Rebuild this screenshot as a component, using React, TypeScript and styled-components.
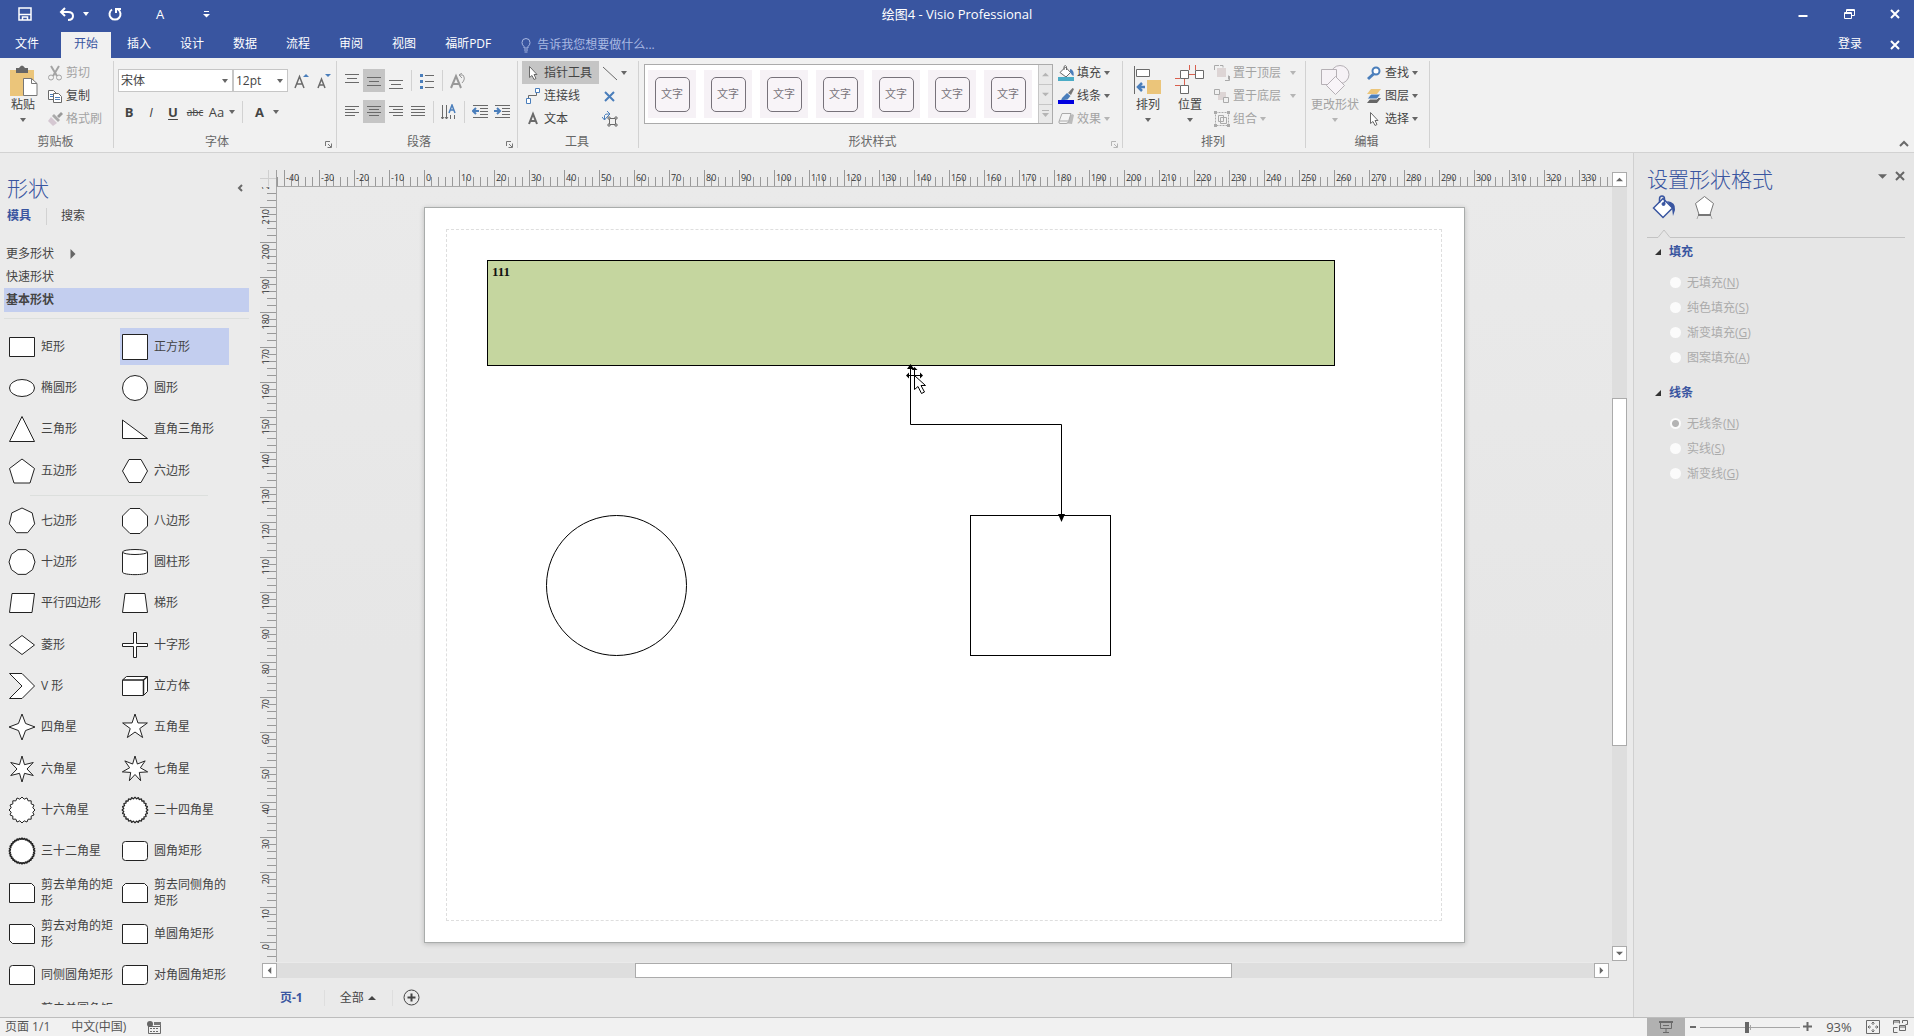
import React from 'react';
import styled, { createGlobalStyle, css } from 'styled-components';

const BLUE = '#3955a0';
const GREY = '#6a6a6a';
const FONT = '"Open Sans", "Noto Sans CJK SC", sans-serif';

const Global = createGlobalStyle`
  * { box-sizing: border-box; }
  body { margin: 0; font: 12px/16px ${FONT}; color: #444; background: #eaeaea; overflow: hidden; }
  button, input, select { font: inherit; color: inherit; }
  button { border: 0; padding: 0; background: none; cursor: default; }
`;

/* ---------- layout ---------- */
const Window = styled.div`
  display: flex;
  flex-direction: column;
  height: 100vh;
`;
const Row = styled.div`
  display: flex;
  align-items: center;
`;
const Column = styled.div`
  display: flex;
  flex-direction: column;
  align-items: flex-start;
`;

/* ---------- title bar ---------- */
const TitleBar = styled.header`
  display: grid;
  grid-template-columns: 1fr auto 1fr;
  height: 32px;
  flex: none;
  background: ${BLUE};
  color: #fff;
`;
const TitleText = styled.h1`
  margin: 0;
  font-size: 13px;
  font-weight: 400;
  line-height: 29px;
`;
const QuickAccess = styled.div`
  display: flex;
  height: 28px;
  padding-left: 10px;
`;
const QuickButton = styled.button<{ $w: number }>`
  display: flex;
  align-items: center;
  justify-content: center;
  gap: 8px;
  width: ${(p) => p.$w}px;
  font-size: 13px;
`;
const WindowButtons = styled.div`
  display: flex;
  justify-content: flex-end;
  gap: 8px;
  height: 28px;
`;
const WindowButton = styled.button`
  display: flex;
  align-items: center;
  justify-content: center;
  width: 38px;
`;

/* ---------- tabs ---------- */
const TabBar = styled.nav`
  display: flex;
  gap: 3px;
  height: 26px;
  flex: none;
  padding-left: 2px;
  background: ${BLUE};
  color: #fff;
`;
const Tab = styled.button<{ $active?: boolean; $file?: boolean }>`
  padding: 0 13px 2px;
  line-height: 22px;
  margin-right: ${(p) => (p.$file ? 6 : 0)}px;
  ${(p) => p.$active && css`background: #f1f1f1; color: ${BLUE};`}
`;
const TellMe = styled.label`
  display: flex;
  align-items: center;
  gap: 6px;
  flex: 1;
  padding-left: 14px;
  color: #a9b9e3;
`;
const TellMeInput = styled.input`
  width: 200px;
  padding: 0;
  border: 0;
  background: none;
  &::placeholder { color: #a9b9e3; opacity: 1; }
`;
const SignIn = styled.button`
  width: 38px;
  margin-right: 4px;
  padding-bottom: 2px;
  line-height: 22px;
`;

/* ---------- ribbon ---------- */
const Ribbon = styled.section`
  display: flex;
  height: 95px;
  flex: none;
  background: #f1f1f1;
  border-bottom: 1px solid #d2d2d2;
`;
const GroupBox = styled.section<{ $w: number; $pad: number }>`
  display: flex;
  flex-direction: column;
  width: ${(p) => p.$w}px;
  margin: 3px 0 4px;
  border-right: 1px solid #d2d2d2;
  & > div:first-child {
    display: flex;
    height: 74px;
    padding-left: ${(p) => p.$pad}px;
  }
`;
const GroupFooter = styled.div`
  display: flex;
  align-items: flex-end;
  padding-right: 2px;
`;
const GroupTitle = styled.h2`
  flex: 1;
  margin: 0;
  font-size: 12px;
  font-weight: 400;
  line-height: 13px;
  text-align: center;
  color: #666;
`;
const Launcher = styled.button`
  display: flex;
  width: 14px;
  padding-right: 2px;
  justify-content: flex-end;
`;
const SmallButton = styled.button<{ $active?: boolean; $far?: boolean }>`
  display: flex;
  align-items: center;
  gap: 3px;
  height: 23px;
  padding: 0 7px 0 3px;
  line-height: 20px;
  white-space: nowrap;
  background: ${(p) => (p.$active ? '#c5c5c5' : 'none')};
  &:disabled { color: #a3a3a3; }
  & > svg:last-child:not(:first-child) { margin-left: ${(p) => (p.$far ? 6 : 0)}px; }
`;
const BigButton = styled.button<{ $w: number }>`
  display: flex;
  flex-direction: column;
  align-items: center;
  width: ${(p) => p.$w}px;
  height: 69px;
  padding-top: 4px;
  line-height: 18px;
  white-space: nowrap;
  & > span { margin-bottom: 4px; }
  &:disabled { color: #a3a3a3; }
`;
const TwoRows = styled.div`
  display: flex;
  flex-direction: column;
  gap: 8px;
  padding-top: 8px;
`;
const ComboBox = styled.label<{ $w: number }>`
  display: grid;
  grid-template-columns: 1fr 10px;
  align-items: center;
  width: ${(p) => p.$w}px;
  height: 23px;
  border: 1px solid #c6c6c6;
  background: #fff;
`;
const ComboSelect = styled.select`
  appearance: none;
  min-width: 0;
  padding: 0 0 0 2px;
  border: 0;
  background: none;
`;
const IconButton = styled.button<{ $w?: number; $active?: boolean }>`
  display: flex;
  align-items: center;
  justify-content: center;
  gap: 5px;
  width: ${(p) => p.$w ?? 22}px;
  height: 23px;
  background: ${(p) => (p.$active ? '#c5c5c5' : 'none')};
`;
const ColorButton = styled(IconButton)`
  gap: 9px;
`;
const Glyph = styled.span<{ $kind?: 'b' | 'i' | 'u' | 's' }>`
  font-size: ${(p) => (p.$kind === 's' ? 10 : 13)}px;
  font-weight: ${(p) => (p.$kind === 'b' || p.$kind === 'u' ? 700 : 400)};
  font-style: ${(p) => (p.$kind === 'i' ? 'italic' : 'normal')};
  text-decoration: ${(p) => (p.$kind === 'u' ? 'underline' : p.$kind === 's' ? 'line-through' : 'none')};
  text-underline-offset: 2px;
`;
const Divider = styled.i<{ $h: number }>`
  width: 1px;
  height: ${(p) => p.$h}px;
  margin: 0 4px;
  background: #d2d2d2;
`;
const Gallery = styled.div`
  display: flex;
  height: 60px;
  margin: 3px 2px 0 0;
  border: 1px solid #ababab;
  background: #fff;
`;
const GalleryItems = styled.div`
  display: flex;
  gap: 8px;
  padding: 5px 6px 5px 3px;
`;
const GalleryItem = styled.button`
  display: flex;
  align-items: center;
  justify-content: center;
  width: 48px;
  background: #f6f2f6;
  & > span {
    width: 35px;
    height: 35px;
    border: 1px solid #77727a;
    border-radius: 5px;
    background: #f8f4f8;
    font-size: 11px;
    line-height: 32px;
    color: #77727a;
  }
`;
const GalleryScroll = styled.div`
  display: grid;
  grid-template-rows: 1fr 1fr 1fr;
  width: 14px;
  border-left: 1px solid #c6c6c6;
  background: #e9e9e9;
  & > button + button { border-top: 1px solid #c6c6c6; }
  & > button { display: flex; align-items: center; justify-content: center; }
`;
const Collapse = styled.button`
  align-self: flex-end;
  margin: 0 5px 5px auto;
  display: flex;
`;

/* ---------- work area ---------- */
const WorkArea = styled.main`
  display: grid;
  grid-template-columns: 260px minmax(0, 1fr) 281px;
  grid-template-rows: minmax(0, 1fr);
  flex: 1;
  min-height: 0;
`;
const ShapesPanel = styled.aside`
  display: flex;
  flex-direction: column;
  min-height: 0;
  padding: 22px 11px 12px 4px;
  background: #ebebeb;
`;
const PanelHead = styled.div`
  display: flex;
  justify-content: space-between;
  padding: 0 6px 0 3px;
`;
const PanelTitle = styled.h2`
  margin: 0;
  font-size: 21px;
  font-weight: 300;
  line-height: 26px;
  color: ${BLUE};
`;
const PanelTabs = styled.div`
  display: flex;
  align-items: center;
  height: 18px;
  margin: 6px 0 17px;
  padding-left: 3px;
`;
const PanelTab = styled.button<{ $active?: boolean }>`
  font-weight: ${(p) => (p.$active ? 700 : 400)};
  color: ${(p) => (p.$active ? BLUE : '#444')};
`;
const PanelDivider = styled(Divider)`
  margin: 0 14px 0 15px;
`;
const Stencil = styled.button<{ $active?: boolean }>`
  display: flex;
  align-items: center;
  gap: 14px;
  height: ${(p) => (p.$active ? 24 : 23)}px;
  padding-left: 2px;
  flex: none;
  font-weight: ${(p) => (p.$active ? 700 : 400)};
  background: ${(p) => (p.$active ? '#c3ceef' : 'none')};
`;
const ShapeList = styled.div`
  flex: 1;
  min-height: 0;
  overflow: hidden;
  margin-top: 6px;
  border-top: 1px solid #dcdfdd;
  padding-top: 7px;
`;
const ShapeGrid = styled.div`
  display: grid;
  grid-template-columns: 113px 112px;
  grid-auto-rows: 41px 41px 42px;
  padding-left: 3px;
  align-items: center;
`;
const ShapeRule = styled.hr`
  width: 178px;
  height: 1px;
  margin: 4px 0 4px 26px;
  border: 0;
  background: #dcdfdd;
`;
const ShapeButton = styled.button<{ $active?: boolean }>`
  display: grid;
  grid-template-columns: 28px 1fr;
  align-items: center;
  gap: 5px;
  width: 109px;
  height: 37px;
  padding-left: 1px;
  text-align: left;
  background: ${(p) => (p.$active ? '#c3ceef' : 'none')};
  & > svg { fill: #fff; stroke: #222; }
`;

const Editor = styled.section`
  display: grid;
  grid-template-columns: 17px minmax(0, 1fr) 15px;
  grid-template-rows: 17px minmax(0, 1fr) 15px 39px;
  padding: 17px 6px 0 0;
  min-width: 0;
  background: #eaeaea;
`;
const Corner = styled.div`
  background:
    linear-gradient(#cfcfcf, #cfcfcf) 8px 0 / 1px 16px no-repeat,
    linear-gradient(#cfcfcf, #cfcfcf) 0 8px / 16px 1px no-repeat;
  border-right: 1px solid #a0a0a0;
`;
const RulerX = styled.div`
  display: flex;
  overflow: hidden;
  border-bottom: 1px solid #a8a8a8;
  color: #333;
  & > span:first-child { margin-left: -28px; }
`;
const RulerY = styled.div`
  overflow: hidden;
  border-right: 1px solid #a8a8a8;
  margin-bottom: 1px;
  color: #333;
  & > span:first-child { margin-top: -15px; }
`;
const CellX = styled.span`
  flex: 0 0 35px;
  padding-left: 2px;
  font-size: 9px;
  line-height: 15px;
  background:
    linear-gradient(#999, #999) 0 0 / 1px 16px no-repeat,
    repeating-linear-gradient(90deg, #999 0 1px, transparent 1px 7px) 0 7px / 35px 9px no-repeat;
`;
const CellY = styled.span`
  display: flex;
  height: 35px;
  padding: 2px 0 0 1px;
  background:
    linear-gradient(#999, #999) 0 0 / 16px 1px no-repeat,
    repeating-linear-gradient(#999 0 1px, transparent 1px 7px) 7px 0 / 9px 35px no-repeat;
  & > b {
    align-self: flex-start;
    font-size: 9px;
    font-weight: 400;
    line-height: 10px;
    writing-mode: vertical-rl;
    transform: rotate(180deg);
  }
`;
const Canvas = styled.div`
  position: relative;
  overflow: hidden;
  margin: 0 0 1px;
  background: linear-gradient(#eaeaea, #e6e6e6 60%);
`;
const Page = styled.div`
  position: absolute;
  left: 147px;
  top: 20px;
  width: 1041px;
  height: 736px;
  border: 1px solid #a9acab;
  background: #fff;
  box-shadow: 0 1px 5px rgba(0, 0, 0, 0.2);
`;
const Margins = styled.div`
  position: absolute;
  inset: 21px 22px 21px 21px;
  border: 1px dashed #dedede;
`;
const Node = styled.div<{ $x: number; $y: number; $w: number; $h: number; $fill?: string; $round?: boolean }>`
  position: absolute;
  left: ${(p) => p.$x}px;
  top: ${(p) => p.$y}px;
  width: ${(p) => p.$w}px;
  height: ${(p) => p.$h}px;
  padding: 3px 4px;
  border: 1px solid #000;
  border-radius: ${(p) => (p.$round ? '50%' : '0')};
  background: ${(p) => p.$fill ?? '#fff'};
  font: bold 13px/16px "Liberation Serif", serif;
  color: #111;
`;
const Overlay = styled.svg`
  position: absolute;
  left: 0;
  top: 0;
`;
const ScrollX = styled.div`
  grid-column: 1 / 3;
  display: flex;
  margin: 0 3px 0 2px;
  background: #dedede;
`;
const ScrollY = styled.div`
  grid-column: 3;
  grid-row: 1 / 3;
  display: flex;
  flex-direction: column;
  margin: 2px 0;
  background: #dedede;
`;
const ScrollButton = styled.button`
  display: flex;
  align-items: center;
  justify-content: center;
  flex: 0 0 15px;
  height: 15px;
  border: 1px solid #ababab;
  background: #fff;
`;
const Gap = styled.span<{ $n: number }>`
  flex: ${(p) => p.$n} 1 0;
`;
const Thumb = styled(Gap)`
  border: 1px solid #ababab;
  background: #fff;
`;
const PageTabs = styled.div`
  grid-column: 1 / 4;
  display: flex;
  align-items: center;
  padding-left: 20px;
`;
const PageTab = styled.button<{ $active?: boolean }>`
  display: flex;
  align-items: center;
  gap: 4px;
  font-weight: ${(p) => (p.$active ? 700 : 400)};
  color: ${(p) => (p.$active ? BLUE : '#444')};
`;
const PageDivider = styled(Divider)<{ $l: number; $r: number }>`
  margin: 0 ${(p) => p.$r}px 0 ${(p) => p.$l}px;
  background: #dedede;
`;

/* ---------- format panel ---------- */
const FormatPanel = styled.aside`
  padding: 12px 9px 0 13px;
  border-left: 1px solid #d0d0d0;
  background: #e6e6e6;
`;
const FormatHead = styled.div`
  display: flex;
  align-items: flex-start;
  gap: 8px;
  & > h2 { flex: 1; line-height: 28px; }
  & > button { padding-top: 4px; }
`;
const FormatTabs = styled.div`
  display: flex;
  gap: 17px;
  padding: 2px 0 0 5px;
  & > button { display: flex; }
`;
const Notch = styled.div`
  display: flex;
  margin: 10px 0 5px;
  & > i { flex: 1; align-self: flex-end; border-top: 1px solid #c3c3c3; }
  & > i:first-child { flex: 0 0 11px; }
`;
const Section = styled.fieldset`
  margin: 0 0 14px;
  padding: 0;
  border: 0;
`;
const Legend = styled.legend`
  display: flex;
  align-items: center;
  gap: 8px;
  height: 18px;
  margin-bottom: 9px;
  padding: 0 0 0 8px;
  font-weight: 700;
  color: ${BLUE};
`;
const Option = styled.label`
  display: flex;
  align-items: center;
  gap: 6px;
  height: 25px;
  padding-left: 23px;
  color: #ababab;
`;
const Radio = styled.input`
  appearance: none;
  width: 11px;
  height: 11px;
  margin: 0;
  border-radius: 50%;
  background: #fbfbfb;
  &:checked { background: radial-gradient(circle, #b4b4b4 0 3px, #fbfbfb 4px); }
`;

/* ---------- status bar ---------- */
const StatusBar = styled.footer`
  display: flex;
  align-items: center;
  height: 19px;
  flex: none;
  padding: 0 6px 0 5px;
  border-top: 1px solid #bdbdbd;
  background: #f1f1f1;
  color: #555;
`;
const StatusLeft = styled.div`
  display: flex;
  align-items: center;
  gap: 21px;
  flex: 1;
`;
const Presenter = styled.button`
  display: flex;
  align-items: center;
  justify-content: center;
  width: 38px;
  height: 18px;
  margin-right: 4px;
  background: #b1b1b1;
`;
const Zoom = styled.input`
  appearance: none;
  width: 100px;
  height: 12px;
  margin: 0 3px;
  background: linear-gradient(#a6a6a6, #a6a6a6) 0 6px / 100% 1px no-repeat,
    linear-gradient(#a6a6a6, #a6a6a6) 50px 4px / 1px 5px no-repeat;
  &::-webkit-slider-thumb { appearance: none; width: 4px; height: 11px; background: #666; }
`;
const ZoomValue = styled.button`
  width: 52px;
  padding-left: 2px;
  font-size: 13px;
`;
const StatusIcons = styled.div`
  display: flex;
  gap: 13px;
  padding-left: 2px;
`;

/* ---------- icons ---------- */
const Caret = ({ dir = 'down', c = '#666', s = 7 }: { dir?: string; c?: string; s?: number }) => {
  const r = { down: 0, left: 90, up: 180, right: 270 }[dir];
  return (
    <svg width={s} height={s} viewBox="0 0 8 8" aria-hidden="true">
      <path d="M0 2h8L4 6z" fill={c} transform={`rotate(${r} 4 4)`} />
    </svg>
  );
};
const Drop = ({ c = '#666' }: { c?: string }) => (
  <svg width="6" height="4" viewBox="0 0 6 4" aria-hidden="true"><path d="M0 0h6L3 4z" fill={c} /></svg>
);
const Icon = ({ w = 16, h = 16, s = GREY, children }: { w?: number; h?: number; s?: string; children: React.ReactNode }) => (
  <svg width={w} height={h} viewBox={`0 0 ${w} ${h}`} fill="none" stroke={s} aria-hidden="true">{children}</svg>
);
const Cross = ({ c = '#fff', s = 10 }: { c?: string; s?: number }) => (
  <svg width={s} height={s} viewBox="0 0 10 10" stroke={c} strokeWidth="2" aria-hidden="true"><path d="M1 1l8 8M9 1L1 9" /></svg>
);
const LauncherIcon = ({ c = '#777' }: { c?: string }) => (
  <Icon w={7} h={7} s={c}><path d="M.5 5V.5H5M3 3l3 3M6.500 2.500v4h-4" /></Icon>
);
/* horizontal rules given as [x1, x2, y] */
const Lines = ({ rows, children }: { rows: number[][]; children?: React.ReactNode }) => (
  <Icon><path d={rows.map(([a, b, y]) => `M${a} ${y + 0.5}H${b}`).join('')} />{children}</Icon>
);
const Pointer = () => (
  <Icon><path d="M4.500 1.500v11l2.500-2 2 4 2-1-2-4h3z" fill="#fff" /></Icon>
);
const Bucket = () => (
  <Icon>
    <path d="M2 7.500L7.500 2l5 5.500L8 12z" fill="#fff" /><path d="M6 5V1.500q1.500-2 2.500 0V5" />
    <path d="M12 4q4.500 1 3.500 7-2-1-3.500-4z" fill="#4a7ebb" stroke="none" />
    <path d="M0 12h16v4H0z" fill="#4bacc6" stroke="none" />
  </Icon>
);
const Brush = () => (
  <Icon>
    <path d="M10 5l4.500-5 1.500 1-3 6z" fill="#777" stroke="none" />
    <path d="M4 10l5-5 3.500 3-3 3.500-6.500 1z" fill="#4a7ebb" stroke="none" />
    <path d="M0 12h16v4H0z" fill="#0000e0" stroke="none" />
  </Icon>
);

const star = (n: number, inner: number, step = Math.PI / n) =>
  Array.from({ length: 2 * n }, (_, i) => {
    const r = i % 2 ? inner : 13;
    const a = i * step - Math.PI / 2;
    return `${(14 + r * Math.cos(a)).toFixed(2)},${(14 + r * Math.sin(a)).toFixed(2)}`;
  }).join(' ');
const regular = (n: number, turn = 0) =>
  Array.from({ length: n }, (_, i) => {
    const a = (i * 2 * Math.PI) / n - Math.PI / 2 + turn;
    return `${(14 + 13 * Math.cos(a)).toFixed(2)},${(14 + 13 * Math.sin(a)).toFixed(2)}`;
  }).join(' ');
const P = (points: string, width = 1) => <polygon points={points} strokeWidth={width} strokeLinejoin={width > 1 ? 'bevel' : 'miter'} />;
const D = (d: string) => <path d={d} />;

type Shape = [string, React.ReactNode];
const basicShapes: Shape[] = [
  ['矩形', D('M1.500 4.500h25v19h-25z')],
  ['正方形', D('M1.500 1.500h25v25h-25z')],
  ['椭圆形', <ellipse cx="14" cy="14" rx="12.500" ry="8.500" />],
  ['圆形', <circle cx="14" cy="14" r="12.500" />],
  ['三角形', P('14,1.500 26.500,26.500 1.500,26.500')],
  ['直角三角形', P('1.500,5 26.500,23.500 1.500,23.500')],
  ['五边形', P('14,2 26.500,11.500 22,26 6,26 1.500,11.500')],
  ['六边形', P('1.500,14 8,2.500 20,2.500 26.500,14 20,25.500 8,25.500')],
];
const moreShapes: Shape[] = [
  ['七边形', P(regular(7))],
  ['八边形', P('9,1.500 19,1.500 26.500,9 26.500,19 19,26.500 9,26.500 1.500,19 1.500,9')],
  ['十边形', P(regular(10, Math.PI / 10))],
  ['圆柱形', <><path d="M1.500 4v20c0 3.500 25 3.500 25 0V4" /><ellipse cx="14" cy="4" rx="12.500" ry="2.500" /></>],
  ['平行四边形', P('4,4.500 26.500,4.500 24,23.500 1.500,23.500')],
  ['梯形', P('4,4.500 24,4.500 26.500,23.500 1.500,23.500')],
  ['菱形', P('14,4.500 26.500,14 14,23.500 1.500,14')],
  ['十字形', D('M12.500 1.500h3v11h11v3h-11v11h-3v-11h-11v-3h11z')],
  ['V 形', P('1.500,1.500 14,1.500 26.500,14 14,26.500 1.500,26.500 14,14')],
  ['立方体', <><path d="M1.500 8l4-3.500h21v15l-4 4h-21z" /><path d="M1.500 8h21v15M22.500 8l4-3.500" strokeWidth="1.500" /></>],
  ['四角星', P(star(4, 5))],
  ['五角星', P(star(5, 5))],
  ['六角星', P(star(6, 5))],
  ['七角星', P(star(7, 5.5))],
  ['十六角星', P(star(16, 11))],
  ['二十四角星', P(star(24, 11.2), 1.2)],
  ['三十二角星', P(star(32, 11.5), 1.5)],
  ['圆角矩形', <rect x="1.500" y="4.500" width="25" height="19" rx="3" />],
  ['剪去单角的矩形', D('M1.500 4.500h22l3 3v16h-25z')],
  ['剪去同侧角的矩形', D('M4.500 4.500h19l3 3v16h-25v-16z')],
  ['剪去对角的矩形', D('M1.500 4.500h22l3 3v16h-22l-3-3z')],
  ['单圆角矩形', D('M1.500 4.500h22q3 0 3 3v16h-25z')],
  ['同侧圆角矩形', D('M4.500 4.500h19q3 0 3 3v16h-25v-16q0-3 3-3z')],
  ['对角圆角矩形', D('M4.500 4.500h22v16q0 3-3 3h-22v-16q0-3 3-3z')],
  ['剪去单圆角矩形', null],
];

const Shapes = ({ items, active }: { items: Shape[]; active?: string }) => (
  <ShapeGrid>
    {items.map(([name, art]) => (
      <ShapeButton key={name} $active={name === active}>
        {art ? <svg width="28" height="28" viewBox="0 0 28 28" aria-hidden="true">{art}</svg> : <span />}
        <span>{name}</span>
      </ShapeButton>
    ))}
  </ShapeGrid>
);

const Group = ({ title, w, pad, launch, children }: {
  title: string; w: number; pad: number; launch?: string; children: React.ReactNode;
}) => (
  <GroupBox $w={w} $pad={pad}>
    <div>{children}</div>
    <GroupFooter>
      <GroupTitle>{title}</GroupTitle>
      {launch && <Launcher aria-label={title}><LauncherIcon c={launch} /></Launcher>}
    </GroupFooter>
  </GroupBox>
);

const Options = ({ title, name, items, checked }: { title: string; name: string; items: string[][]; checked?: number }) => (
  <Section disabled>
    <Legend>
      <svg width="6" height="6" viewBox="0 0 6 6" aria-hidden="true"><path d="M6 0v6H0z" fill="#333" /></svg>
      {title}
    </Legend>
    {items.map(([text, key], i) => (
      <Option key={text}>
        <Radio type="radio" name={name} defaultChecked={i === checked} />
        <span>{text}(<u>{key}</u>)</span>
      </Option>
    ))}
  </Section>
);

const range = (from: number, to: number, step: number) =>
  Array.from({ length: (to - from) / step + 1 }, (_, i) => from + i * step);

export default function App() {
  return (
    <Window>
      <Global />
      <TitleBar>
        <QuickAccess>
          <QuickButton $w={30} aria-label="保存">
            <Icon w={14} h={14} s="#fff"><path d="M1 1h12v12H1zM1 7.500h12M4.500 13v-3h5v3" strokeWidth="1.500" /></Icon>
          </QuickButton>
          <QuickButton $w={68} aria-label="撤消">
            <Icon w={16} h={14} s="#fff"><path d="M6 1L2 5l4 4M2 5h7q5 0 5 4t-5 4" strokeWidth="2" /></Icon>
            <Drop c="#fff" />
          </QuickButton>
          <QuickButton $w={14} aria-label="重复">
            <Icon w={14} h={14} s="#fff"><path d="M4 2.500a5.500 5.500 0 1 0 6 0M8 6V2h5" strokeWidth="2" /></Icon>
          </QuickButton>
          <QuickButton $w={76}>A</QuickButton>
          <QuickButton $w={16} aria-label="自定义快速访问工具栏">
            <Icon w={7} h={7} s="#fff"><path d="M1 .5h5" /><path d="M0 3h7L3.500 6.500z" fill="#fff" stroke="none" /></Icon>
          </QuickButton>
        </QuickAccess>
        <TitleText>绘图4 - Visio Professional</TitleText>
        <WindowButtons>
          <WindowButton aria-label="最小化"><Icon w={10} h={10} s="#fff"><path d="M.5 7h9" strokeWidth="2" /></Icon></WindowButton>
          <WindowButton aria-label="还原"><Icon w={11} h={10} s="#fff"><path d="M.5 3.500h7v6h-7zM.5 4.500h7M2.500 3V.5h8v6H8M2.500 1.500h8" /></Icon></WindowButton>
          <WindowButton aria-label="关闭"><Cross /></WindowButton>
        </WindowButtons>
      </TitleBar>

      <TabBar>
        <Tab $file>文件</Tab>
        <Tab $active>开始</Tab>
        {['插入', '设计', '数据', '流程', '审阅', '视图', '福昕PDF'].map((t) => <Tab key={t}>{t}</Tab>)}
        <TellMe>
          <Icon w={10} h={16} s="#a9b9e3"><path d="M3 11V9.500Q1 8 1 5.500a4 4 0 0 1 8 0Q9 8 7 9.500V11zM3 13h4M3.500 15h3" /></Icon>
          <TellMeInput placeholder="告诉我您想要做什么..." aria-label="告诉我您想要做什么" />
        </TellMe>
        <SignIn>登录</SignIn>
        <WindowButton aria-label="关闭文档"><Cross /></WindowButton>
      </TabBar>

      <Ribbon>
        <Group title="剪贴板" w={114} pad={2}>
          <BigButton $w={42}>
            <Icon w={29} h={31} s="none">
              <path d="M1 5h24v26H1z" fill="#ebc57a" /><path d="M7 3h3q3-5 6 0h3v5H7z" fill="#666" />
              <path d="M14.500 13.500h8l5.500 5V30.500H14.500z" fill="#fff" stroke="#777" /><path d="M22.500 13.500v5H28" stroke="#777" />
            </Icon>
            <span>粘贴</span><Drop />
          </BigButton>
          <Column>
            <SmallButton disabled>
              <Icon s="#a3a3a3"><path d="M4 1l6 10M12 1L6 11" strokeWidth="2" /><circle cx="4" cy="12.500" r="2.500" /><circle cx="12" cy="12.500" r="2.500" /></Icon>剪切
            </SmallButton>
            <SmallButton>
              <Icon><path d="M1.500 2.500h5l3 3v6h-8z" fill="#fff" /><path d="M6.500 5.500h5l3 3v6h-8z" fill="#fff" /><path d="M3 6.500h3M3 8.500h3M8 9.500h5M8 11.500h5" stroke="#4a7ebb" /></Icon>复制
            </SmallButton>
            <SmallButton disabled>
              <Icon s="none"><path d="M10 5l4-4 2 2-4 4z" fill="#999" /><path d="M7 3l6 6-2 2-6-6z" fill="#aaa" /><path d="M4 6l6 6-4 3-5-5z" fill="#d5c8d2" /></Icon>格式刷
            </SmallButton>
          </Column>
        </Group>

        <Group title="字体" w={223} pad={4} launch="#777">
          <TwoRows>
            <Row>
              <ComboBox $w={115}><ComboSelect aria-label="字体"><option>宋体</option></ComboSelect><Drop /></ComboBox>
              <ComboBox $w={55}><ComboSelect aria-label="字号"><option>12pt</option></ComboSelect><Drop /></ComboBox>
              <IconButton $w={26} aria-label="增大字号"><Icon><path d="M2 15L6.500 3.500 11 15M3.500 11h6" strokeWidth="1.500" /><path d="M10 4h6l-3-3z" fill="#4a7ebb" stroke="none" /></Icon></IconButton>
              <IconButton $w={20} aria-label="减小字号"><Icon><path d="M2 15L5.500 6 9 15M3.500 12h4" strokeWidth="1.500" /><path d="M9 1h6l-3 3z" fill="#4a7ebb" stroke="none" /></Icon></IconButton>
            </Row>
            <Row>
              <IconButton><Glyph $kind="b">B</Glyph></IconButton>
              <IconButton><Glyph $kind="i">I</Glyph></IconButton>
              <IconButton><Glyph $kind="u">U</Glyph></IconButton>
              <IconButton><Glyph $kind="s">abc</Glyph></IconButton>
              <IconButton $w={32}><Glyph>Aa</Glyph><Drop /></IconButton>
              <Divider $h={22} />
              <ColorButton $w={40}><Glyph $kind="b">A</Glyph><Drop /></ColorButton>
            </Row>
          </TwoRows>
        </Group>

        <Group title="段落" w={181} pad={4} launch="#777">
          <TwoRows>
            <Row>
              <IconButton aria-label="顶端对齐"><Lines rows={[[1, 15, 1], [3, 13, 5], [1, 15, 9]]} /></IconButton>
              <IconButton $active aria-label="中部对齐"><Lines rows={[[1, 15, 4], [3, 13, 8], [1, 15, 12]]} /></IconButton>
              <IconButton aria-label="底端对齐"><Lines rows={[[1, 15, 7], [3, 13, 11], [1, 15, 15]]} /></IconButton>
              <Divider $h={21} />
              <IconButton aria-label="项目符号">
                <Lines rows={[[6, 15, 2], [6, 15, 8], [6, 15, 14]]}>
                  <path d="M1 1h3v3H1zM1 7h3v3H1zM1 13h3v3H1z" fill="#4a7ebb" stroke="none" />
                </Lines>
              </IconButton>
              <Divider $h={21} />
              <IconButton aria-label="旋转文本">
                <Icon s="#999"><path d="M1 15L6 3l5 12M3 11h6" strokeWidth="2" /><path d="M9 2h4q3 4-1 8M12 0L9 2l3 3" /></Icon>
              </IconButton>
            </Row>
            <Row>
              <IconButton aria-label="左对齐"><Lines rows={[[1, 15, 2], [1, 11, 5], [1, 15, 8], [1, 11, 11]]} /></IconButton>
              <IconButton $active aria-label="居中"><Lines rows={[[1, 15, 2], [3, 13, 5], [1, 15, 8], [3, 13, 11]]} /></IconButton>
              <IconButton aria-label="右对齐"><Lines rows={[[1, 15, 2], [5, 15, 5], [1, 15, 8], [5, 15, 11]]} /></IconButton>
              <IconButton aria-label="两端对齐"><Lines rows={[[1, 15, 2], [1, 15, 5], [1, 15, 8], [1, 15, 11]]} /></IconButton>
              <Divider $h={22} />
              <IconButton aria-label="文字方向">
                <Icon><path d="M1.500 1v14M5.500 1v14M9.500 11v4M13.500 11v4M0 13l1.500 2L3 13M4 13l1.500 2L7 13" /><path d="M8 9l3-8 3 8M9 6h4" stroke="#4a7ebb" strokeWidth="1.500" /></Icon>
              </IconButton>
              <Divider $h={22} />
              {['减少缩进量', '增加缩进量'].map((t, i) => (
                <IconButton key={t} aria-label={t}>
                  <Lines rows={[[1, 16, 1], [8, 16, 4], [8, 16, 7], [8, 16, 10], [1, 16, 13]]}>
                    <path d={i ? 'M0 7h6M3 4l3 3-3 3' : 'M7 7H1M4 4L1 7l3 3'} stroke="#4a7ebb" strokeWidth="2" />
                  </Lines>
                </IconButton>
              ))}
            </Row>
          </TwoRows>
        </Group>

        <Group title="工具" w={121} pad={4}>
          <Column>
            <SmallButton $active><Pointer />指针工具</SmallButton>
            <SmallButton>
              <Icon><path d="M3.500 10V7.500h8V5" /><path d="M1.500 10.500h4v5h-4zM10.500.5h4v4h-4z" stroke="#4a7ebb" fill="#fff" /></Icon>连接线
            </SmallButton>
            <SmallButton><Icon><path d="M4 13L8 3l4 10M5.500 10h5" strokeWidth="2" /></Icon>文本</SmallButton>
          </Column>
          <Column>
            <SmallButton aria-label="线条"><Icon><path d="M1 2l14 13" /></Icon><Drop /></SmallButton>
            <SmallButton aria-label="连接点"><Icon s="#4a7ebb"><path d="M3 4l9 9M12 4l-9 9" strokeWidth="2" /></Icon></SmallButton>
            <SmallButton aria-label="文本块">
              <Icon><path d="M7.500 7.500h6v6h-6z" /><path d="M6 6h2v2H6zM13 6h2v2h-2zM6 13h2v2H6zM13 13h2v2h-2z" fill="#fff" /><path d="M2.500 9V4.500Q3 2.500 7 3M5 0l3 3-3 3M0 6l2.500 3L5 6" stroke="#4a7ebb" /></Icon>
            </SmallButton>
          </Column>
        </Group>

        <Group title="形状样式" w={484} pad={5} launch="#b5b5b5">
          <Gallery>
            <GalleryItems>
              {range(1, 7, 1).map((i) => <GalleryItem key={i}><span>文字</span></GalleryItem>)}
            </GalleryItems>
            <GalleryScroll>
              <button aria-label="上一行"><Caret dir="up" c="#b5b5b5" /></button>
              <button aria-label="下一行"><Caret c="#b5b5b5" /></button>
              <button aria-label="更多"><Icon w={7} h={7} s="#b5b5b5"><path d="M0 .5h7" /><path d="M0 3h7L3.500 7z" fill="#b5b5b5" stroke="none" /></Icon></button>
            </GalleryScroll>
          </Gallery>
          <Column>
            <SmallButton><Bucket />填充<Drop /></SmallButton>
            <SmallButton><Brush />线条<Drop /></SmallButton>
            <SmallButton disabled>
              <Icon s="#aaa"><path d="M5 12l9 1 2-9-2-1z" fill="#bbb" stroke="none" /><path d="M4 2.500h9l-2.500 8q-.5 2-2.500 2H2q-1.500 0-1-2z" fill="#f4f4f4" /><path d="M1 10h9" /></Icon>效果<Drop c="#b5b5b5" />
            </SmallButton>
          </Column>
        </Group>

        <Group title="排列" w={183} pad={4}>
          <BigButton $w={42}>
            <Icon w={28} h={31}>
              <path d="M.5 1v28" /><path d="M2.500 4.500h13v7h-13z" fill="#fff" />
              <path d="M13 15h14v14H13z" fill="#ebc57a" stroke="none" /><path d="M11 22H4M8 18l-4 4 4 4" stroke="#4a7ebb" strokeWidth="2.500" />
            </Icon>
            <span>排列</span><Drop />
          </BigButton>
          <BigButton $w={42}>
            <Icon w={30} h={31}>
              <path d="M14.500 0v5M20.500 0v5M14 9.500h7M9.500 14v7M0 13.500h5M0 20.500h5" stroke="#d9604e" />
              <path d="M5.500 5.500h8v8h-8zM20.500 5.500h8v8h-8zM5.500 20.500h8v8h-8z" fill="#fff" />
            </Icon>
            <span>位置</span><Drop />
          </BigButton>
          <Column>
            <SmallButton disabled $far>
              <Icon s="#aaa"><path d="M.5 5V.5H5M11 15.500h4.500V11" /><path d="M3 3h9v9H3z" fill="#ddd5d5" stroke="none" /><path d="M6 .5h3v2M14.500 14.500v-4" /></Icon>置于顶层<Drop c="#b5b5b5" />
            </SmallButton>
            <SmallButton disabled $far>
              <Icon s="#aaa"><path d="M4 4h8v8H4z" fill="#ddd5d5" stroke="none" /><path d="M.5 1.500h5v5h-5zM9.500 9.500h5v5h-5z" fill="#f1f1f1" /></Icon>置于底层<Drop c="#b5b5b5" />
            </SmallButton>
            <SmallButton disabled>
              <Icon s="#aaa"><path d="M4.500 4.500h5v6h-5zM6.500 6.500h6v6h-6z" /><path d="M1.500 1.500h13v13h-13z" strokeDasharray="2 1" /><path d="M0 0h3v3H0zM13 0h3v3h-3zM0 13h3v3H0zM13 13h3v3h-3z" fill="#aaa" stroke="none" /></Icon>组合<Drop c="#b5b5b5" />
            </SmallButton>
          </Column>
        </Group>

        <Group title="编辑" w={124} pad={1}>
          <BigButton $w={56} disabled>
            <Icon w={30} h={31} s="#b5b0b5">
              <circle cx="20" cy="9.500" r="9" fill="#f6f2f6" /><path d="M1.500 4.500h15v15h-15z" fill="#f6f2f6" /><path d="M15.500 11.500l9 9-9 9-9-9z" fill="#f8f4f8" />
            </Icon>
            <span>更改形状</span><Drop c="#b5b5b5" />
          </BigButton>
          <Column>
            <SmallButton>
              <Icon s="#4a7ebb"><circle cx="10" cy="6" r="3.500" fill="#fff" strokeWidth="2" /><path d="M7.500 9L2 14" strokeWidth="3" /></Icon>查找<Drop />
            </SmallButton>
            <SmallButton>
              <Icon s="none"><path d="M5 10h10l-4 5H1z" fill="#666" /><path d="M5 6h10l-4 5H1z" fill="#4a7ebb" stroke="#f1f1f1" /><path d="M5 1h10l-4 5H1z" fill="#ebc57a" /></Icon>图层<Drop />
            </SmallButton>
            <SmallButton><Pointer />选择<Drop /></SmallButton>
          </Column>
        </Group>
        <Collapse aria-label="折叠功能区"><Icon w={10} h={7}><path d="M1 6l4-4 4 4" strokeWidth="2" /></Icon></Collapse>
      </Ribbon>

      <WorkArea>
        <ShapesPanel>
          <PanelHead>
            <PanelTitle>形状</PanelTitle>
            <button aria-label="折叠形状窗口"><Icon w={6} h={8}><path d="M5 1L2 4l3 3" strokeWidth="2" /></Icon></button>
          </PanelHead>
          <PanelTabs>
            <PanelTab $active>模具</PanelTab><PanelDivider $h={17} /><PanelTab>搜索</PanelTab>
          </PanelTabs>
          <Stencil>更多形状<Caret dir="right" s={10} /></Stencil>
          <Stencil>快速形状</Stencil>
          <Stencil $active>基本形状</Stencil>
          <ShapeList>
            <Shapes items={basicShapes} active="正方形" />
            <ShapeRule />
            <Shapes items={moreShapes} />
          </ShapeList>
        </ShapesPanel>

        <Editor>
          <Corner />
          <RulerX>{range(-50, 330, 10).map((n) => <CellX key={n}>{n === -50 ? '' : n}</CellX>)}</RulerX>
          <RulerY>{range(0, 220, 10).reverse().map((n) => <CellY key={n}><b>{n}</b></CellY>)}</RulerY>
          <Canvas>
            <Page>
              <Margins />
              <Node $x={62} $y={52} $w={848} $h={106} $fill="#c5d69f">111</Node>
              <Node $x={121} $y={307} $w={141} $h={141} $round />
              <Node $x={545} $y={307} $w={141} $h={141} />
              <Overlay width="1039" height="734" viewBox="0 0 1039 734" fill="none" stroke="#000">
                <path d="M485.500 158v58.500h151V308" />
                <path d="M482 161l3.500-5 3.500 5zM633 306h7l-3.500 8z" fill="#000" stroke="none" />
                <path d="M482 167.500h14M489.500 160v14" stroke="#000" />
                <path d="M481 167.500l3-3v6zM498 167.500l-3-3v6zM489.500 159l-3 3h6z" fill="#000" stroke="none" />
                <path d="M489.500 167.500v14l3.500-3 3.500 7 3-1.500-3.500-6.500h4.500z" fill="#fff" />
              </Overlay>
            </Page>
          </Canvas>
          <ScrollY>
            <ScrollButton aria-label="向上滚动"><Caret dir="up" /></ScrollButton>
            <Gap $n={211} /><Thumb $n={347} /><Gap $n={200} />
            <ScrollButton aria-label="向下滚动"><Caret /></ScrollButton>
          </ScrollY>
          <ScrollX>
            <ScrollButton aria-label="向左滚动"><Caret dir="left" /></ScrollButton>
            <Gap $n={359} /><Thumb $n={595} /><Gap $n={363} />
            <ScrollButton aria-label="向右滚动"><Caret dir="right" /></ScrollButton>
          </ScrollX>
          <PageTabs>
            <PageTab $active>页-1</PageTab>
            <PageDivider $h={16} $l={21} $r={15} />
            <PageTab>全部<svg width="8" height="4" viewBox="0 0 8 4" aria-hidden="true"><path d="M0 4h8L4 0z" fill="#444" /></svg></PageTab>
            <PageDivider $h={16} $l={16} $r={10} />
            <PageTab aria-label="插入页">
              <Icon w={17} h={17} s="#444"><circle cx="8.500" cy="8.500" r="7.500" /><path d="M8.500 4.500v8M4.500 8.500h8" strokeWidth="2" /></Icon>
            </PageTab>
          </PageTabs>
        </Editor>

        <FormatPanel>
          <FormatHead>
            <PanelTitle>设置形状格式</PanelTitle>
            <button aria-label="任务窗格选项"><Caret s={9} /></button>
            <button aria-label="关闭窗格"><Cross c="#666" /></button>
          </FormatHead>
          <FormatTabs>
            <button aria-label="填充与线条">
              <Icon w={25} h={24} s={BLUE}>
                <path d="M1.500 13L11 3.500l9.500 9.500L11 22.500z" fill="#fff" strokeWidth="1.500" />
                <path d="M7.500 8V4q0-3 2.500-3t2.500 3v5" strokeWidth="1.500" /><circle cx="11.500" cy="9" r="1.500" fill={BLUE} />
                <path d="M15 6q9 1 8 9l-2 6-1-8z" fill={BLUE} stroke="none" />
              </Icon>
            </button>
            <button aria-label="效果">
              <Icon w={21} h={24} s="#777">
                <path d="M10.500 1.500l9 7-3.500 11H5l-3.500-11z" fill="#fff" /><path d="M4 20h13" strokeWidth="2" /><path d="M4 21l-1 3M17 21l1 3" stroke="#aaa" />
              </Icon>
            </button>
          </FormatTabs>
          <Notch><i /><Icon w={12} h={9} s="#c3c3c3"><path d="M0 8.500L6 1l6 7.500" /></Icon><i /></Notch>
          <Options title="填充" name="fill" items={[['无填充', 'N'], ['纯色填充', 'S'], ['渐变填充', 'G'], ['图案填充', 'A']]} />
          <Options title="线条" name="line" checked={0} items={[['无线条', 'N'], ['实线', 'S'], ['渐变线', 'G']]} />
        </FormatPanel>
      </WorkArea>

      <StatusBar>
        <StatusLeft>
          <span>页面 1/1</span>
          <span>中文(中国)</span>
          <Icon w={14} h={13}><path d="M1.500 5v7.500h12V1.500H7M2 5.500h11" /><path d="M3 7.500h9M3 10.500h9" strokeDasharray="2 1" /><path d="M7 1h7v3H7z" fill="#777" stroke="none" /><circle cx="3" cy="3" r="3" fill="#666" stroke="none" /></Icon>
        </StatusLeft>
        <Presenter aria-label="演示模式">
          <Icon w={14} h={14}><path d="M0 2h14" strokeWidth="2" /><path d="M1.500 3v5.500h11V3M4 5.500h6M7 8.500v4M4 12.500h6" /></Icon>
        </Presenter>
        <button aria-label="缩小"><Icon w={8} h={8}><path d="M1 4h6" strokeWidth="2" /></Icon></button>
        <Zoom type="range" min="0" max="100" defaultValue="47" aria-label="缩放" />
        <button aria-label="放大"><Icon w={9} h={9}><path d="M0 4.500h9M4.500 0v9" strokeWidth="2" /></Icon></button>
        <ZoomValue>93%</ZoomValue>
        <StatusIcons>
          <Icon w={14} h={14}><path d="M.5.5h13v13H.5zM7 2v3M7 9v3M2 7h3M9 7h3M5.500 3.500L7 2l1.500 1.500M5.500 10.500L7 12l1.500-1.500M3.500 5.500L2 7l1.500 1.500M10.500 5.500L12 7l-1.500 1.500" /></Icon>
          <Icon w={15} h={14}><path d="M.5 4.500v-4h6v3M.5 2h6M9.500 3V.5h5v4h-2M.5 12.500v-5h4M.5 12.500h4M6.500 5.500h6v5h-6zM6.500 7h6" /></Icon>
        </StatusIcons>
      </StatusBar>
    </Window>
  );
}
